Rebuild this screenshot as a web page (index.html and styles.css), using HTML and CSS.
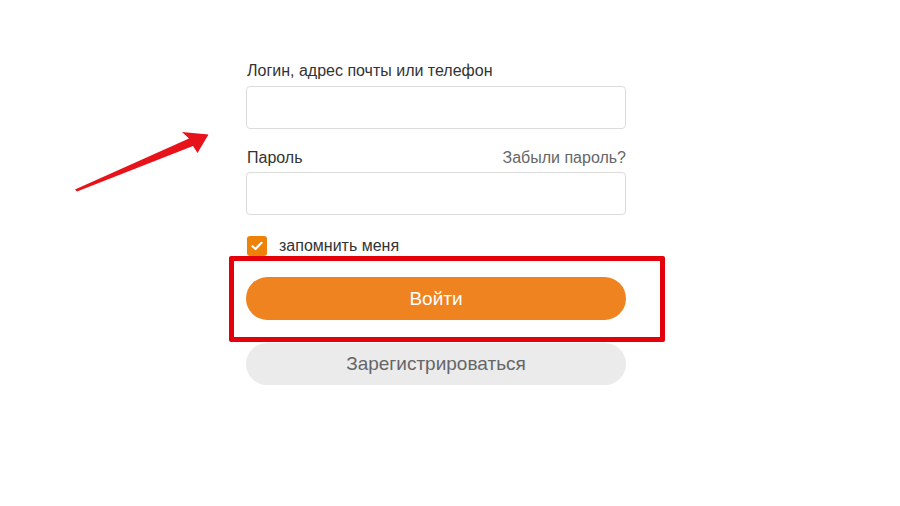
FILE: index.html
```html
<!DOCTYPE html>
<html lang="ru">
<head>
  <meta charset="UTF-8">
  <title>Вход</title>
  <link rel="stylesheet" href="styles.css">
</head>
<body>

<div class="login-form">
  <div class="field-label">
    <span>Логин, адрес почты или телефон</span>
  </div>
  <input class="field" type="text">

  <div class="field-label second">
    <span>Пароль</span>
    <a class="forgot" href="#">Забыли пароль?</a>
  </div>
  <input class="field" type="password">

  <label class="remember">
    <span class="check">
      <svg width="12" height="10" viewBox="0 0 12 10"><path d="M1.5 5.2 L4.5 8 L10.5 1.8" fill="none" stroke="#fff" stroke-width="2.2" stroke-linecap="round" stroke-linejoin="round"/></svg>
    </span>
    запомнить меня
  </label>

  <button class="btn-login">Войти</button>
  <button class="btn-register">Зарегистрироваться</button>
</div>

<!-- пометки поверх скриншота -->
<div class="highlight"></div>
<svg class="arrow" width="900" height="506" viewBox="0 0 900 506">
  <path d="M75 189.5 L189 138.5 L182 132 L208.5 134.5 L197.5 153 L193 146 L77 191.5 Z" fill="#e8121b"/>
</svg>

</body>
</html>
```

FILE: styles.css
```css
* { box-sizing: border-box; }
body {
  margin: 0;
  font-family: Arial, "Liberation Sans", sans-serif;
  background-color: #fff;
  position: relative;
  height: 506px;
}
.login-form {
  width: 380px;
  margin-left: 246px;
  padding-top: 62px;
  display: flex;
  flex-direction: column;
}
.field-label {
  display: flex;
  justify-content: space-between;
  font-size: 16px;
  line-height: 18px;
  color: #333;
  padding-left: 1px;
  margin-bottom: 6px;
}
.field-label.second {
  margin-top: 20px;
  margin-bottom: 5px;
}
.forgot {
  color: #666;
  text-decoration: none;
}
.field {
  height: 43px;
  border: 1px solid #dcdcdc;
  border-radius: 4px;
  outline: none;
  font-size: 15px;
  padding: 0 12px;
}
.remember {
  display: flex;
  align-items: center;
  gap: 12px;
  margin-top: 21px;
  margin-left: 1px;
  height: 20px;
  font-size: 16px;
  color: #333;
}
.check {
  width: 20px;
  height: 20px;
  border-radius: 3px;
  background-color: #ee8208;
  display: flex;
  align-items: center;
  justify-content: center;
}
.btn-login, .btn-register {
  height: 43px;
  border: none;
  border-radius: 22px;
  font-family: Arial, "Liberation Sans", sans-serif;
  font-size: 19px;
  cursor: pointer;
}
.btn-login {
  margin-top: 21px;
  background-color: #ee8320;
  color: #fff;
}
.btn-register {
  margin-top: 23px;
  height: 42px;
  background-color: #ebebeb;
  color: #666;
}
.highlight {
  position: absolute;
  left: 229px;
  top: 256px;
  width: 436px;
  height: 86px;
  border: 5px solid #e3000b;
  border-radius: 2px;
}
.arrow {
  position: absolute;
  left: 0;
  top: 0;
  pointer-events: none;
}
```
